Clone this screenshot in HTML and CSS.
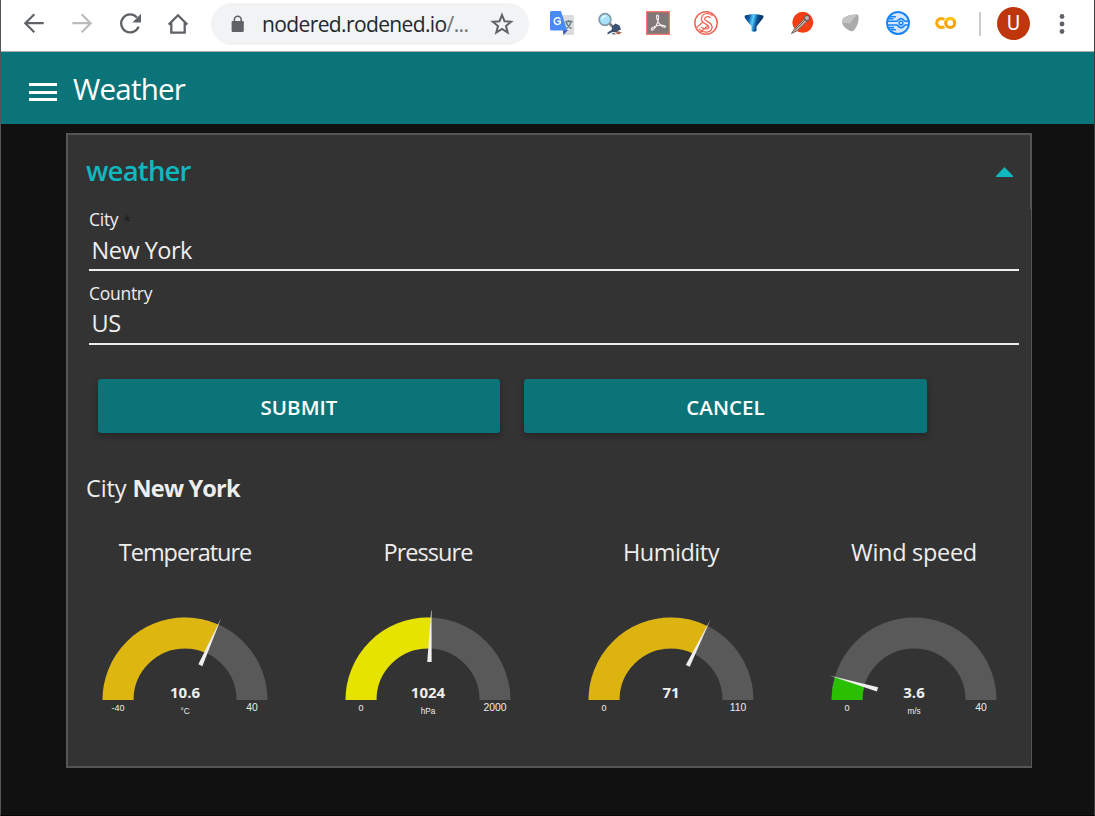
FILE: index.html
```html
<!DOCTYPE html>
<html lang="en">
<head>
<meta charset="utf-8">
<title>Weather</title>
<link rel="stylesheet" href="styles.css">
</head>
<body>
<div class="window">
  <div class="toolbar">
    <div class="cell"><svg width="24" height="24" viewBox="0 0 24 24" fill="none" stroke="#5f6368" stroke-width="2.2"><path d="M21.7 11.2H3.5M12.3 2.2l-9 9 9 9"/></svg></div>
    <div class="cell"><svg width="24" height="24" viewBox="0 0 24 24" fill="none" stroke="#babcbe" stroke-width="2.2"><path d="M2.3 11.2h18.2M11.7 2.2l9 9-9 9"/></svg></div>
    <div class="cell"><svg width="24" height="24" viewBox="0 0 24 24"><path d="M18.9 5.4A9 9 0 1 0 20.6 14.6" fill="none" stroke="#5f6368" stroke-width="2.3"/><path d="M23 1.8v8.6h-8.6z" fill="#5f6368"/></svg></div>
    <div class="cell"><svg width="24" height="24" viewBox="0 0 24 24" fill="none" stroke="#5f6368" stroke-width="2.3"><path d="M2.7 12.6 12 3.3l9.3 9.3M5.3 11v9.7h13.4V11"/></svg></div>
    <div class="address">
      <svg class="lock" width="14" height="18" viewBox="0 0 14 18"><path d="M3.4 7V4.6a3.4 3.4 0 0 1 6.8 0V7" fill="none" stroke="#5f6368" stroke-width="1.6"/><rect x=".6" y="6" width="12.2" height="11" rx="1.3" fill="#5f6368"/></svg>
      <span class="url">nodered.rodened.io<span class="path">/...</span></span>
      <svg class="star" width="24" height="24" viewBox="0 0 24 24"><path d="M12 3l2.5 6.2 6.6.5-5.1 4.3 1.7 6.6-5.7-3.6-5.7 3.6L8 14 2.9 9.700l6.600-.5z" fill="none" stroke="#5f6368" stroke-width="2"/></svg>
    </div>
    <div class="extensions">
      <div class="cell"><svg width="24" height="24" viewBox="0 0 24 24"><path d="M9 4h13.500a1.500 1.500 0 0 1 1.500 1.500V22.500a1.500 1.500 0 0 1-1.500 1.500H13.500z" fill="#dcdcdc"/><path d="M13 19h5l-4.500 5z" fill="#3a50b8"/><path d="M1.500 0H11l6.200 19.500H1.500A1.500 1.500 0 0 1 0 18V1.500A1.500 1.500 0 0 1 1.500 0z" fill="#4a8af4"/><path d="M10.300 8.300A3.300 3.300 0 1 0 10.300 11.900V10.200H7.400" fill="none" stroke="#fff" stroke-width="1.500"/><path d="M15.500 10.500h7M18.500 9v1.500M21 11c-.7 3-2.500 5-4.500 6.500M16 11c1 3 3 5 5.500 6.500" fill="none" stroke="#607d80" stroke-width="1.300"/></svg></div>
      <div class="cell"><svg width="24" height="24" viewBox="0 0 24 24"><path d="M11.500 12.500l4 4" stroke="#777" stroke-width="2.500"/><circle cx="7" cy="8.500" r="5.900" fill="#a9e2fa" stroke="#829baa" stroke-width="1.700"/><path d="M4 8a4 4 0 0 1 4-3" stroke="#e5faff" stroke-width="1.700" fill="none"/><path d="M14.500 15l3-2.500 4 2 1.500 4-2.500 1-2 2-4-.5-5 2.500v-2l4-2.500z" fill="#3d5273"/><path d="M19.500 20l4.500 1.500-3.500 2-2.500-1z" fill="#a5674e"/><path d="M13 23l3-1 2 1.500z" fill="#342c30"/></svg></div>
      <div class="cell"><svg width="24" height="24" viewBox="0 0 24 24"><rect x=".6" y=".6" width="22.800" height="22.800" fill="#807777" stroke="#f5796b" stroke-width="1.300"/><path d="M11.600 4c-2 0-.8 4.500.8 7.300 2 3.400 5.500 5.700 6.800 4.800 1.500-1.200-2.500-2.600-6.800-1.600-4.800 1-8 3-7 4.300 1.200 1.200 4.200-2.200 5.700-6 1.600-4 2-8.800.5-8.800z" fill="none" stroke="#f4eeee" stroke-width="1.200"/></svg></div>
      <div class="cell"><svg width="24" height="24" viewBox="0 0 24 24" fill="none"><circle cx="12" cy="12" r="11.200" stroke="#f06553" stroke-width="1.500"/><path d="M17.500 6C15 2.800 9 4 9 8c0 4 7.500 3.500 7.500 8 0 4-6.500 5-10.500 1" stroke="#f06553" stroke-width="4.400"/><path d="M17.500 6C15 2.800 9 4 9 8c0 4 7.500 3.500 7.500 8 0 4-6.500 5-10.500 1" stroke="#fff" stroke-width="1.900"/><path d="M2.500 16.500 9 11M6 21.500l8-7" stroke="#f06553" stroke-width="1.200"/></svg></div>
      <div class="cell"><svg class="funnel" width="24" height="26" viewBox="0 0 24 26"><defs><linearGradient id="blue" x2="1" y2=".2"><stop offset="0" stop-color="#043c7b"/><stop offset=".25" stop-color="#0a55a0"/><stop offset=".48" stop-color="#55d0ff"/><stop offset=".7" stop-color="#0d4f95"/><stop offset="1" stop-color="#062b58"/></linearGradient></defs><path d="M4 3.500Q12 .5 20.500 3.500L23 7l-5 8v7q-5.500 4.500-11 0v-7L2 6z" fill="#fff"/><path d="M2.800 4.500Q12 1.500 21.200 4.500q.8 1.500-.8 3.500L14.500 15.500v4.500q-2.500 1.500-5 0v-4.500L3.600 8Q2 6 2.800 4.500z" fill="url(#blue)"/></svg></div>
      <div class="cell"><svg width="24" height="24" viewBox="0 0 24 24"><circle cx="12.800" cy="11.300" r="10.500" fill="#f53f12"/><path d="M1.500 22.500 5 17l9-9 3 2.500-9.500 9z" fill="#c8a899" stroke="#77605a" stroke-width="1"/><circle cx="17" cy="7" r="2.600" fill="#bdb5ae" stroke="#6b5b55" stroke-width="1.200"/><path d="M5.500 18.500l9-9" stroke="#6d5f5b"/></svg></div>
      <div class="cell"><svg width="24" height="24" viewBox="0 0 24 24"><path d="M5.500 7Q11 3.500 19 3.600q1.800.3 1.600 2.500.2 8-4.500 13.200-2.300 1.600-5 .2Q5 16 4 11.500 3.800 8 5.500 7z" fill="#aaa"/><path d="M5.500 7Q11 3.500 19 3.600L12 12.500l-8-.8Q3.800 8 5.500 7z" fill="#c4c4c4"/></svg></div>
      <div class="cell"><svg width="24" height="24" viewBox="0 0 24 24" fill="none" stroke="#1683fa" stroke-width="1.600"><circle cx="12" cy="12" r="11" fill="#d7e8fd" stroke-width="1.900"/><path d="M1.500 10.300h9c1.500 0 2-2.700 4.500-2.700s3 2.700 4.500 2.700h3M1.500 14h9c1.500 0 2 2.700 4.500 2.700s3-2.700 4.500-2.700h3M4 5.800h6M2.500 7.800h5M5 18.800h5M3 16.600h5"/><circle cx="15" cy="12.100" r="1.800" fill="#fff"/></svg></div>
      <div class="cell"><svg width="24" height="24" viewBox="0 0 24 24" fill="none" stroke-width="3.100"><path d="M10.300 8.700A4.500 4.500 0 1 0 10.300 15.300" stroke="#fbaa05"/><circle cx="16.200" cy="12" r="4.500" stroke="#f8a00a"/><path d="M12 10.400a4.500 4.500 0 0 1 8-1" stroke="#ffc414"/></svg></div>
    </div>
    <span class="divider"></span>
    <span class="avatar">U</span>
    <svg class="more" width="6" height="22" viewBox="0 0 6 22" fill="#5f6368"><circle cx="3" cy="3.500" r="2.400"/><circle cx="3" cy="11" r="2.400"/><circle cx="3" cy="18.500" r="2.400"/></svg>
  </div>

  <header class="app-bar">
    <div class="menu"><i></i><i></i><i></i></div>
    <h1>Weather</h1>
  </header>

  <main class="card">
    <div class="card-head">
      <h2>weather</h2>
      <svg width="18" height="10" viewBox="0 0 18 10"><path d="M0 10V9L8.500 0 17 9v1z" fill="#0eb8c0"/></svg>
    </div>
    <div class="field field-city">
      <div class="label label-city">City<span class="star-mark">*</span></div>
      <div class="value value-city">New York</div>
    </div>
    <div class="field field-country">
      <div class="label label-country">Country</div>
      <div class="value value-country">US</div>
    </div>
    <div class="actions">
      <button class="button submit">SUBMIT</button>
      <button class="button cancel">CANCEL</button>
    </div>
    <p class="city-line">City <b>New York</b></p>
    <div class="gauges">
      <section class="gauge">
        <h3 class="t-temp">Temperature</h3>
        <svg width="198" height="120" viewBox="0 0 198 120">
          <path class="track" d="M32 100a67 67 0 0 1 134 0"/>
          <path class="level" stroke="#deb610" pathLength="180" stroke-dasharray="113.850 400" d="M32 100a67 67 0 0 1 134 0"/>
          <path class="needle" transform="rotate(113.850 99 100)" d="M61 97.800L9.400 100 61 102.200z"/>
          <text class="num" x="99" y="98">10.6</text><text class="min" x="32" y="111">-40</text><text class="max" x="166" y="111">40</text><text class="unit" x="99" y="114">°C</text>
        </svg>
      </section>
      <section class="gauge">
        <h3 class="t-pres">Pressure</h3>
        <svg width="198" height="120" viewBox="0 0 198 120">
          <path class="track" d="M32 100a67 67 0 0 1 134 0"/>
          <path class="level" stroke="#e6e300" pathLength="180" stroke-dasharray="92.160 400" d="M32 100a67 67 0 0 1 134 0"/>
          <path class="needle" transform="rotate(92.160 99 100)" d="M61 97.800L9.400 99.800v.4L61 102.200z"/>
          <text class="num" x="99" y="98">1024</text><text class="min" x="32" y="111">0</text><text class="max" x="166" y="111">2000</text><text class="unit" x="99" y="114">hPa</text>
        </svg>
      </section>
      <section class="gauge">
        <h3 class="t-hum">Humidity</h3>
        <svg width="198" height="120" viewBox="0 0 198 120">
          <path class="track" d="M32 100a67 67 0 0 1 134 0"/>
          <path class="level" stroke="#ddb310" pathLength="180" stroke-dasharray="116.180 400" d="M32 100a67 67 0 0 1 134 0"/>
          <path class="needle" transform="rotate(116.180 99 100)" d="M61 97.800L9.400 100 61 102.200z"/>
          <text class="num" x="99" y="98">71</text><text class="min" x="32" y="111">0</text><text class="max" x="166" y="111">110</text>
        </svg>
      </section>
      <section class="gauge">
        <h3 class="t-wind">Wind speed</h3>
        <svg width="198" height="120" viewBox="0 0 198 120">
          <path class="track" d="M32 100a67 67 0 0 1 134 0"/>
          <path class="level" stroke="#2abf00" pathLength="180" stroke-dasharray="16.200 400" d="M32 100a67 67 0 0 1 134 0"/>
          <path class="needle" transform="rotate(16.200 99 100)" d="M61 97.800L11 100 61 102.200z"/>
          <text class="num" x="99" y="98">3.6</text><text class="min" x="32" y="111">0</text><text class="max" x="166" y="111">40</text><text class="unit" x="99" y="114">m/s</text>
        </svg>
      </section>
    </div>
  </main>
</div>
</body>
</html>
```
FILE: styles.css
```css
* { box-sizing: border-box; }
body { margin: 0; background: #111; font-family: "Open Sans", "Noto Sans", sans-serif; color: #eee; }
h1, h2, h3, p { margin: 0; font-weight: 400; white-space: nowrap; }
svg { display: block; flex: none; }
.window { width: 1095px; height: 816px; overflow: hidden; background: #111; border-left: 1px solid #555; border-right: 1px solid #3c3c3c; border-bottom: 1px solid #060606; }

.toolbar { display: flex; align-items: center; height: 52px; padding: 0 0 4px 9px; background: #fff; border-bottom: 1px solid #a9adad; }
.cell { display: flex; justify-content: center; width: 48px; flex: none; }
.address { display: flex; align-items: center; width: 318px; height: 42px; margin: 1px 9px 0; padding: 0 15px 0 20px; border-radius: 21px; background: #f1f3f4; flex: none; }
.url { margin-left: 17px; font-size: 21px; line-height: 42px; letter-spacing: -.62px; color: #24272b; white-space: nowrap; }
.path { color: #6f7378; }
.star { margin-left: auto; }
.extensions { display: flex; }
.divider { width: 2px; height: 24px; margin-left: 9px; background: #cdcdcd; }
.avatar { width: 33px; height: 33px; margin-left: 16px; border-radius: 50%; background: #bf360c; color: #fff; font: 20px/33px Roboto, sans-serif; text-align: center; }
.more { margin-left: 28.500px; }

.app-bar { display: flex; align-items: center; height: 72px; padding-left: 28px; background: #0a7478; }
.menu { display: grid; gap: 4.500px; width: 28px; padding-top: 8px; }
.menu i { height: 3px; background: #fff; }
.app-bar h1 { margin-left: 16px; padding-top: 2px; font-size: 29.500px; line-height: 70px; letter-spacing: -.75px; color: #fff; }

.card { position: relative; width: 966px; height: 635px; margin: 9px 0 0 65px; padding: 0 18px; background: #333; border: 2px solid #555; border-right-width: 1px; }
.card::after { content: ""; position: absolute; top: 0; right: 0; width: 1px; height: 74px; background: #555; }
.card-head { display: flex; align-items: center; justify-content: space-between; height: 70px; }
.card-head h2 { padding-top: 2px; font-size: 27.500px; font-weight: 600; line-height: 68px; letter-spacing: -.8px; color: #0eb8c0; }
.card-head svg { margin: 4px -1px 0 0; }
.field { width: 930px; margin-left: 3px; border-bottom: 2px solid #eee; }
.field-city { margin-top: 1px; padding-bottom: 2px; }
.field-country { margin-top: 9px; padding-bottom: 3px; }
.label { font-size: 17.500px; line-height: 26px; letter-spacing: -.28px; }
.value { padding-left: 2.500px; font-size: 23.500px; line-height: 34px; letter-spacing: -.5px; }
.value-city { padding-top: 1px; }
.star-mark { margin-left: 5px; font-size: 14px; line-height: 1; color: #1c1c1c; }
.actions { display: flex; gap: 24px; margin: 34px 0 0 12px; }
.button { width: 402px; height: 54px; padding: 2px 0 0; border: 0; border-radius: 3px; background: #0a7478; box-shadow: 0 3px 7px rgba(0, 0, 0, .3); color: #fff; font: 600 20.500px/52px "Open Sans", sans-serif; letter-spacing: .05px; }
.cancel { width: 403px; }
.city-line { margin-top: 37px; font-size: 23.500px; line-height: 36px; letter-spacing: -.1px; }
.city-line b { letter-spacing: -.8px; }
.gauges { display: grid; grid-template-columns: repeat(4, 198px); column-gap: 45px; margin-top: 28px; }
.gauge h3 { font-size: 23.500px; line-height: 36px; letter-spacing: -.5px; text-align: center; }
.gauge .t-temp { letter-spacing: -1.030px; }
.gauge .t-pres { letter-spacing: -.95px; }
.gauge .t-wind { letter-spacing: -.3px; }
.gauge svg { margin-top: 30px; overflow: visible; }
.track, .level { fill: none; stroke-width: 31px; }
.track { stroke: #595959; }
.needle { fill: #eee; }
.gauge text { fill: #eee; font-family: "Liberation Sans", sans-serif; text-anchor: middle; }
.gauge .num { font-family: "Open Sans", sans-serif; font-size: 15px; font-weight: 700; }
.gauge .min { font-size: 9px; }
.gauge .max { font-size: 10.400px; }
.gauge .unit { font-size: 8.200px; }
```
